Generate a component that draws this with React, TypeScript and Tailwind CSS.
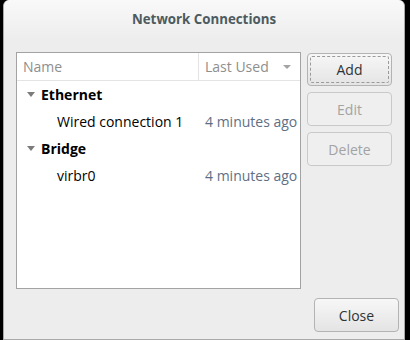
import React from "react";

const font = { fontFamily: '"Open Sans", "DejaVu Sans", sans-serif' };

function Tri() {
  return (
    <svg width="8" height="5" viewBox="0 0 8 5" className="shrink-0">
      <path d="M0 0 L8 0 L4 5 Z" fill="#7b7b7b" />
    </svg>
  );
}

export default function App() {
  return (
    <div className="w-[410px] h-[340px] bg-black pl-[3px]" style={font}>
      <div className="w-[402px] h-[340px] rounded-t-[6px] border border-t-0 border-[#a9a9a9] bg-[#ededed] flex flex-col">
        <div className="h-[40px] rounded-t-[6px] bg-gradient-to-b from-[#f9f9f9] to-[#ededed] flex items-center justify-center">
          <span className="text-[13.3px] font-bold text-[#4c5b60] leading-none">Network Connections</span>
        </div>
        <div className="flex mt-[12px] ml-[12px]">
          <div className="w-[285px] h-[237px] bg-white border border-[#a3a3a3] flex flex-col">
            <div className="h-[28px] flex border-b border-[#e3e3e3] text-[14px] text-[#8e8e8e]">
              <div className="w-[182px] border-r border-[#e3e3e3] pl-[6px] flex items-center">Name</div>
              <div className="flex-1 flex items-center pl-[6px] justify-between pr-[9px]">
                <span>Last Used</span>
                <svg width="8" height="4" viewBox="0 0 8 4"><path d="M0 0 L8 0 L4 4 Z" fill="#a3a3a3" /></svg>
              </div>
            </div>
            <div className="text-[14px] text-[#2e3436]">
              <div className="h-[27px] flex items-center pl-[10px] gap-[6px]">
                <Tri />
                <span className="font-bold text-black">Ethernet</span>
              </div>
              <div className="h-[27px] flex items-center">
                <span className="w-[188px] pl-[40px] text-black">Wired connection 1</span>
                <span className="text-[#5e6f85]">4 minutes ago</span>
              </div>
              <div className="h-[27px] flex items-center pl-[10px] gap-[6px]">
                <Tri />
                <span className="font-bold text-black">Bridge</span>
              </div>
              <div className="h-[27px] flex items-center">
                <span className="w-[188px] pl-[40px] text-black">virbr0</span>
                <span className="text-[#5e6f85]">4 minutes ago</span>
              </div>
            </div>
          </div>
          <div className="ml-[6px] w-[85px] flex flex-col gap-[6px] mt-[1px]">
            <button className="h-[33px] rounded-[4px] border border-[#b3b3b3] bg-gradient-to-b from-[#f7f7f7] to-[#e4e4e4] p-[2px]">
              <div className="w-full h-full border border-dashed border-[#9a9a9a] rounded-[2px] flex items-center justify-center text-[14px] text-[#2e3436]">Add</div>
            </button>
            <button className="h-[34px] rounded-[4px] border border-[#c9c9c9] bg-[#efefef] flex items-center justify-center text-[14px] text-[#a3a3a3]">Edit</button>
            <button className="h-[34px] rounded-[4px] border border-[#c9c9c9] bg-[#efefef] flex items-center justify-center text-[14px] text-[#a3a3a3]">Delete</button>
          </div>
        </div>
        <div className="flex justify-end mt-[9px] mr-[5px]">
          <button className="w-[85px] h-[34px] rounded-[4px] border border-[#b3b3b3] bg-gradient-to-b from-[#f7f7f7] to-[#e4e4e4] flex items-center justify-center text-[14px] text-[#2e3436]">Close</button>
        </div>
      </div>
    </div>
  );
}
